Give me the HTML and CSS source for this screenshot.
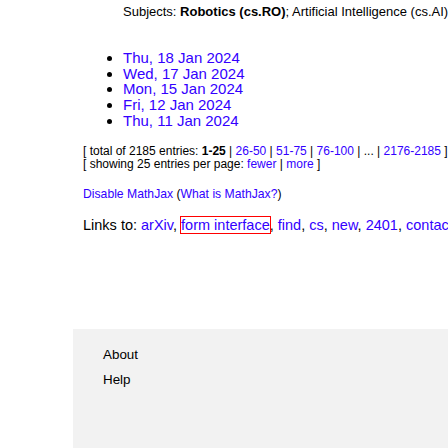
FILE: index.html
```html
<!DOCTYPE html>
<html>
<head>
<meta charset="utf-8">
<link rel="stylesheet" href="styles.css">
</head>
<body>
<div class="page">
  <div class="main">
    <div class="subjects">Subjects: <span class="primary">Robotics (cs.RO)</span>; Artificial Intelligence (cs.AI)</div>
    <ul class="dates">
      <li><a href="#">Thu, 18 Jan 2024</a></li>
      <li><a href="#">Wed, 17 Jan 2024</a></li>
      <li><a href="#">Mon, 15 Jan 2024</a></li>
      <li><a href="#">Fri, 12 Jan 2024</a></li>
      <li><a href="#">Thu, 11 Jan 2024</a></li>
    </ul>
    <div class="paging">
      <div>[ total of 2185 entries: <b>1-25</b> | <a href="#">26-50</a> | <a href="#">51-75</a> | <a href="#">76-100</a> | ... | <a href="#">2176-2185</a> ]</div>
      <div>[ showing 25 entries per page: <a href="#">fewer</a> | <a href="#">more</a> ]</div>
    </div>
    <div class="mathjax"><a href="#">Disable MathJax</a> (<a href="#">What is MathJax?</a>)</div>
    <div class="links">Links to: <a href="#">arXiv</a>, <a href="#" class="focused">form interface</a>, <a href="#">find</a>, <a href="#">cs</a>, <a href="#">new</a>, <a href="#">2401</a>, <a href="#">contact</a></div>
  </div>
  <div class="footer">
    <div class="foot-link">About</div>
    <div class="foot-link">Help</div>
  </div>
</div>
</body>
</html>
```
FILE: styles.css
```css
html, body {
  margin: 0;
  padding: 0;
  overflow: hidden;
  background: #fff;
}
body {
  font-family: "Liberation Sans", Arial, sans-serif;
  color: #000;
  width: 448px;
  height: 448px;
}
.page {
  padding-top: 4px;
  white-space: nowrap;
}
a {
  color: #3300ff;
  text-decoration: none;
}
.main {
  padding-left: 83px;
  overflow: hidden;
}
.subjects {
  margin-left: 40px;
  font-size: 13px;
  line-height: 15px;
}
.primary {
  font-weight: bold;
}
.dates {
  margin: 31px 0 0 0;
  padding-left: 40px;
  font-size: 15px;
  line-height: 15.7px;
}
.paging {
  margin-top: 16.5px;
  font-size: 12px;
  line-height: 13.3px;
}
.mathjax {
  margin-top: 15.4px;
  font-size: 12.2px;
  line-height: 14px;
}
.links {
  margin-top: 15px;
  font-size: 14.5px;
  line-height: 16px;
  padding-top: 1px;
  padding-bottom: 1px;
}
.focused {
  outline: 1px solid #ff0000;
}
.footer {
  margin-top: 95px;
  margin-left: 73px;
  background: #f2f2f2;
  padding: 18px 30px 80px;
}
.foot-link {
  font-size: 13.4px;
  line-height: 16px;
}
.foot-link + .foot-link {
  margin-top: 9px;
}
```
